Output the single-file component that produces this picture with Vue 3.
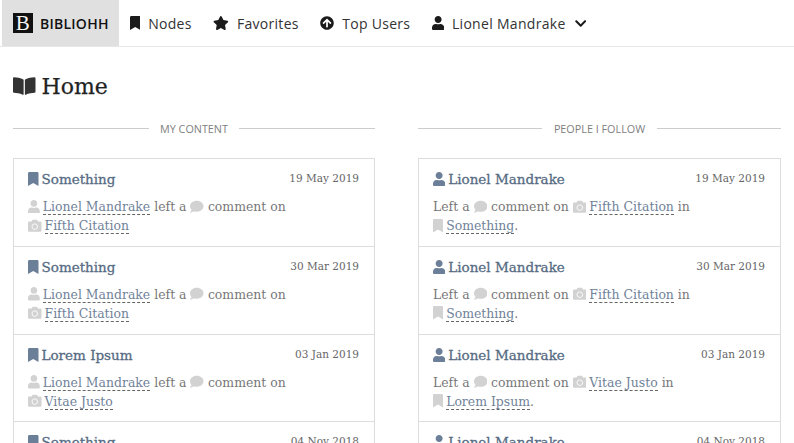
<script setup>
const mine = [
  { title: 'Something', date: '19 May 2019', citation: 'Fifth Citation' },
  { title: 'Something', date: '30 Mar 2019', citation: 'Fifth Citation' },
  { title: 'Lorem Ipsum', date: '03 Jan 2019', citation: 'Vitae Justo' },
  { title: 'Something', date: '04 Nov 2018', citation: 'Fifth Citation' },
]

const user = 'Lionel Mandrake'

const paths = {
  bookmark: 'M0 512V48C0 21.49 21.49 0 48 0h288c26.51 0 48 21.49 48 48v464L192 400 0 512z',
  star: 'M259.3 17.8L194 150.2 47.9 171.5c-26.2 3.8-36.7 36.1-17.7 54.6l105.7 103-25 145.5c-4.5 26.3 23.2 46 46.4 33.7L288 439.6l130.7 68.7c23.2 12.2 50.9-7.4 46.4-33.7l-25-145.5 105.7-103c19-18.5 8.5-50.8-17.7-54.6L382 150.2 316.7 17.8c-11.7-23.6-45.6-23.9-57.4 0z',
  up: 'M8 256C8 119 119 8 256 8s248 111 248 248-111 248-248 248S8 393 8 256zm143.6 28.9l72.4-75.5V392c0 13.3 10.7 24 24 24h16c13.3 0 24-10.7 24-24V209.4l72.4 75.5c9.3 9.7 24.8 9.9 34.3.4l10.9-11c9.4-9.4 9.4-24.6 0-33.9L273 107.7c-9.4-9.4-24.6-9.4-33.9 0L106.3 240.4c-9.4 9.4-9.4 24.6 0 33.9l10.9 11c9.6 9.5 25.1 9.3 34.4-.4z',
  user: 'M224 256c70.7 0 128-57.3 128-128S294.7 0 224 0 96 57.3 96 128s57.3 128 128 128zm89.6 32h-16.7c-22.2 10.2-46.9 16-72.9 16s-50.6-5.8-72.9-16h-16.7C60.2 288 0 348.2 0 422.4V464c0 26.5 21.5 48 48 48h352c26.5 0 48-21.5 48-48v-41.6c0-74.2-60.2-134.4-134.4-134.4z',
  chevron: 'M207.029 381.476L12.686 187.132c-9.373-9.373-9.373-24.569 0-33.941l22.667-22.667c9.357-9.357 24.522-9.375 33.901-.04L224 284.505l154.745-154.021c9.379-9.335 24.544-9.317 33.901.04l22.667 22.667c9.373 9.373 9.373 24.569 0 33.941L240.971 381.476c-9.373 9.372-24.569 9.372-33.942 0z',
  comment: 'M256 32C114.6 32 0 125.1 0 240c0 49.6 21.4 95 57 130.7C44.5 421.1 2.7 466 2.2 466.5c-2.2 2.3-2.8 5.7-1.5 8.7S4.8 480 8 480c66.3 0 116-31.8 140.6-51.4 32.7 12.3 69 19.4 107.4 19.4 141.4 0 256-93.1 256-208S397.4 32 256 32z',
  camera: 'M512 144v288c0 26.5-21.5 48-48 48H48c-26.5 0-48-21.5-48-48V144c0-26.5 21.5-48 48-48h88l12.3-32.9c7-18.7 24.9-31.1 44.9-31.1h125.5c20 0 37.9 12.4 44.9 31.1L376 96h88c26.5 0 48 21.5 48 48zM376 288c0-66.2-53.8-120-120-120s-120 53.8-120 120 53.8 120 120 120 120-53.8 120-120zm-32 0c0 48.5-39.5 88-88 88s-88-39.5-88-88 39.5-88 88-88 88 39.5 88 88z',
  book: 'M542.22 32.05c-54.8 3.11-163.72 14.43-230.96 55.59-4.64 2.84-7.27 7.89-7.27 13.17v363.87c0 11.55 12.63 18.85 23.28 13.49 69.18-34.82 169.23-44.32 218.7-46.92 16.89-.89 30.02-14.43 30.02-30.66V62.75c.01-17.71-15.35-31.74-33.77-30.7zM264.73 87.64C197.5 46.48 88.58 35.17 33.78 32.05 15.36 31.01 0 45.04 0 62.75V400.6c0 16.24 13.13 29.78 30.02 30.66 49.49 2.6 149.59 12.11 218.77 46.95 10.62 5.35 23.21-1.94 23.21-13.46V100.63c0-5.29-2.62-10.14-7.27-12.99z',
}
const boxes = { bookmark: '0 0 384 512', star: '0 0 576 512', up: '0 0 512 512', user: '0 0 448 512', chevron: '0 0 448 512', comment: '0 0 512 512', camera: '0 0 512 512', book: '0 0 576 512' }
</script>

<template>
  <div class="page">
    <nav class="nav">
      <a class="brand"><span class="logo">B</span><span class="brand-name">BIBLIOHH</span></a>
      <a class="nav-item"><svg class="nav-icon" :viewBox="boxes.bookmark"><path :d="paths.bookmark" /></svg>Nodes</a>
      <a class="nav-item"><svg class="nav-icon" :viewBox="boxes.star"><path :d="paths.star" /></svg>Favorites</a>
      <a class="nav-item"><svg class="nav-icon" :viewBox="boxes.up"><path :d="paths.up" /></svg>Top Users</a>
      <a class="nav-item"><svg class="nav-icon" :viewBox="boxes.user"><path :d="paths.user" /></svg>{{ user }}<svg class="chevron" :viewBox="boxes.chevron"><path :d="paths.chevron" /></svg></a>
    </nav>

    <main class="content">
      <h1 class="page-title"><svg class="title-icon" :viewBox="boxes.book"><path :d="paths.book" /></svg>Home</h1>

      <div class="columns">
        <section class="column">
          <div class="divider"><span>MY CONTENT</span></div>
          <div class="card">
            <div class="row" v-for="item in mine" :key="item.date">
              <div class="row-head">
                <h3 class="row-title"><svg class="head-icon" :viewBox="boxes.bookmark"><path :d="paths.bookmark" /></svg>{{ item.title }}</h3>
                <span class="date">{{ item.date }}</span>
              </div>
              <p class="row-text">
                <svg class="ic" :viewBox="boxes.user"><path :d="paths.user" /></svg>
                <a class="link">{{ user }}</a> left a
                <svg class="ic" :viewBox="boxes.comment"><path :d="paths.comment" /></svg>
                comment on<br>
                <svg class="ic" :viewBox="boxes.camera"><path :d="paths.camera" /></svg>
                <a class="link">{{ item.citation }}</a>
              </p>
            </div>
          </div>
        </section>

        <section class="column">
          <div class="divider"><span>PEOPLE I FOLLOW</span></div>
          <div class="card">
            <div class="row" v-for="item in mine" :key="item.date">
              <div class="row-head">
                <h3 class="row-title"><svg class="head-icon user" :viewBox="boxes.user"><path :d="paths.user" /></svg>{{ user }}</h3>
                <span class="date">{{ item.date }}</span>
              </div>
              <p class="row-text">
                Left a
                <svg class="ic" :viewBox="boxes.comment"><path :d="paths.comment" /></svg>
                comment on
                <svg class="ic" :viewBox="boxes.camera"><path :d="paths.camera" /></svg>
                <a class="link">{{ item.citation }}</a> in<br>
                <svg class="ic" :viewBox="boxes.bookmark"><path :d="paths.bookmark" /></svg>
                <a class="link">{{ item.title }}</a>.
              </p>
            </div>
          </div>
        </section>
      </div>
    </main>
  </div>
</template>

<style>
html, body {
  margin: 0;
  background: #fff;
  overflow: hidden;
}
</style>

<style scoped>
.page {
  width: 794px;
  height: 443px;
  overflow: hidden;
  font-family: "DejaVu Serif", serif;
}
.nav {
  display: flex;
  height: 46px;
  padding-left: 2px;
  border-bottom: 1px solid #e8e8e8;
  font-family: "Open Sans", sans-serif;
  font-size: 14px;
  letter-spacing: 0.3px;
  color: #333;
}
.brand {
  display: flex;
  align-items: center;
  width: 117px;
  box-sizing: border-box;
  padding-left: 11px;
  background: #e0e0e0;
  color: #111;
  font-weight: 600;
}
.logo {
  width: 20px;
  height: 20px;
  margin-right: 7px;
  background: #111;
  color: #f4f4f4;
  font: 400 21px/20px "Liberation Serif", serif;
  text-align: center;
}
.brand-name {
  letter-spacing: 0.25px;
}
.nav-item {
  display: flex;
  align-items: center;
  padding: 0 10.7px;
}
.nav-icon {
  height: 14px;
  margin-right: 8px;
  fill: #1b1b1b;
}
.chevron {
  height: 13px;
  margin-left: 9px;
  fill: #1b1b1b;
}
.content {
  padding: 0 13px;
}
.page-title {
  display: flex;
  align-items: center;
  margin: 23px 0 0;
  height: 32px;
  font-size: 22px;
  font-weight: 400;
  color: #222;
  -webkit-text-stroke: 0.25px #222;
}
.title-icon {
  height: 20px;
  margin-right: 6px;
  fill: #333;
}
.columns {
  display: flex;
  justify-content: space-between;
  margin-top: 18px;
}
.column {
  width: 362px;
}
.column:last-child {
  width: 363px;
}
.divider {
  display: flex;
  align-items: center;
  gap: 11.5px;
  height: 16px;
  font-family: "Open Sans", sans-serif;
  font-size: 10.8px;
  color: #808080;
}
.divider::before,
.divider::after {
  content: "";
  flex: 1;
  height: 1px;
  background: #ccc;
}
.card {
  margin-top: 22px;
  border: 1px solid #ddd;
}
.row {
  height: 86.75px;
  padding: 0 15px 0 14px;
  border-bottom: 1px solid #ddd;
}
.row-head {
  display: flex;
  justify-content: space-between;
  padding-top: 10px;
}
.row-title {
  display: flex;
  align-items: center;
  margin: 0;
  height: 20px;
  font-size: 13.5px;
  font-weight: 400;
  color: #566b83;
  -webkit-text-stroke: 0.3px #566b83;
}
.head-icon {
  height: 14px;
  margin-right: 3px;
  fill: #6b7f98;
}
.date {
  font-size: 10.5px;
  line-height: 18px;
  color: #666;
}
.row-text {
  margin: 8px 0 0;
  font-size: 12.45px;
  line-height: 19px;
  color: #777;
}
.ic {
  height: 13.5px;
  vertical-align: -2px;
  fill: #d2d2d2;
}
.ic + .link {
  margin-left: 3px;
}
.link {
  color: #6f8299;
  border-bottom: 1px dashed #666;
}
</style>
